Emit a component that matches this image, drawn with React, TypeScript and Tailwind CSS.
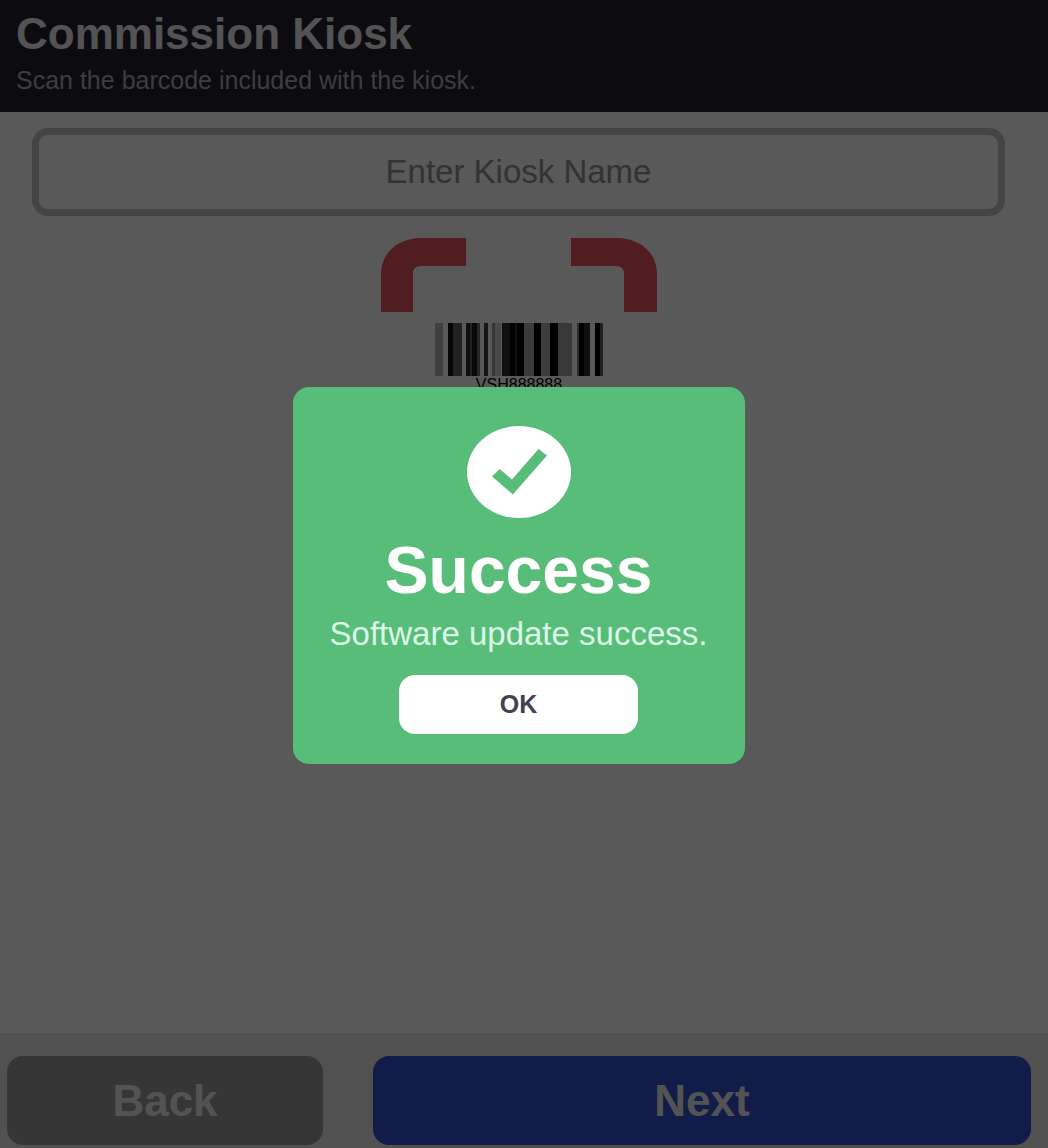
import { useState } from 'react'

// x, width, fill of each bar
const BARS: [number, number, string][] = [
  [54, 8, '#b4b4b4'],
  [67, 5, '#101010'],
  [72, 9, '#606060'],
  [85, 4, '#282828'],
  [89, 2, '#606060'],
  [91, 5, '#181818'],
  [96, 3, '#707070'],
  [103, 4, '#404040'],
  [111, 3, '#989898'],
  [114, 6, '#d4d4d4'],
  [121, 6, '#303030'],
  [127, 2, '#303030'],
  [129, 5, '#000000'],
  [134, 2, '#303030'],
  [136, 7, '#000000'],
  [143, 10, '#a8a8a8'],
  [153, 7, '#000000'],
  [160, 9, '#b0b0b0'],
  [169, 8, '#000000'],
  [177, 14, '#a0a0a0'],
  [196, 2, '#888888'],
  [198, 5, '#000000'],
  [203, 6, '#303030'],
  [214, 5, '#000000'],
  [219, 3, '#606060'],
]

function BarcodeScan() {
  return (
    <svg viewBox="0 0 276 242" className="h-[242px] w-[276px]" role="img" aria-label="Barcode">
      <g fill="#ea535e">
        <path d="M0 74V36C0 14 18 0 40 0H85V28H40Q32 28 32 36V74Z" />
        <path d="M276 74V36C276 14 258 0 236 0H190V28H235Q243 28 243 36V74Z" />
        <path d="M0 168V206C0 228 18 242 40 242H85V214H40Q32 214 32 206V168Z" />
        <path d="M276 168V206C276 228 258 242 236 242H190V214H235Q243 214 243 206V168Z" />
      </g>
      {BARS.map(([x, width, fill]) => (
        <rect key={x} x={x} y="85" width={width} height="53" fill={fill} />
      ))}
      <text x="138" y="152" textAnchor="middle" fontSize="16" fill="#000000">
        VSH888888
      </text>
    </svg>
  )
}

function SuccessIcon() {
  return (
    <svg viewBox="0 0 104 92" className="h-[92px] w-[104px]" aria-hidden="true">
      <ellipse cx="52" cy="46" rx="52" ry="46" fill="#ffffff" />
      <path d="M32.5 43L45 53.5L71.5 23L80 29.5L45.8 68.5L25 50.5Z" fill="#58bd79" />
    </svg>
  )
}

export default function App() {
  const [name, setName] = useState('')
  const [open, setOpen] = useState(true)

  return (
    <div className="relative flex min-h-screen flex-col bg-white font-['Liberation_Sans',sans-serif]">
      <header className="bg-[#22202e] px-4 pt-2.5 pb-4">
        <h1 className="text-[44px] leading-[48px] font-bold text-[#ededed]">Commission Kiosk</h1>
        <p className="mt-1.5 text-[25px] leading-8 text-[#b0b0b4]">Scan the barcode included with the kiosk.</p>
      </header>

      <main className="flex flex-1 flex-col items-center gap-[22px] pt-4 pr-[43px] pl-8">
        <input
          type="text"
          aria-label="Enter Kiosk Name"
          placeholder="Enter Kiosk Name"
          value={name}
          onChange={(e) => setName(e.target.value)}
          className="h-[88px] w-full rounded-2xl border-[7px] border-[#c2c2c2] bg-white text-center text-[33px] placeholder:text-[#929292]"
        />
        <BarcodeScan />
      </main>

      <footer className="grid grid-cols-[316fr_658fr] gap-[50px] bg-[#e7e7e7] pt-[23px] pr-[17px] pb-[3px] pl-[7px] text-[44px] font-bold text-[#ededed]">
        <button type="button" className="h-[89px] rounded-2xl bg-[#9a9a9a]">
          Back
        </button>
        <button type="button" className="h-[89px] rounded-2xl bg-[#3153ce]">
          Next
        </button>
      </footer>

      {/* Modal */}
      {open && (
        <div className="absolute inset-0 flex items-center justify-center bg-black/65 pt-[3px] pr-[11px]">
          <div
            role="dialog"
            aria-modal="true"
            aria-labelledby="dialog-title"
            className="flex w-[452px] flex-col items-center rounded-2xl bg-[#58bd79] pt-[39px] pb-[30px]"
          >
            <SuccessIcon />
            <h2 id="dialog-title" className="mt-5 text-[66px] leading-[64px] font-bold text-white">
              Success
            </h2>
            <p className="mt-3 text-[33px] leading-10 text-[#dcf8e8]">Software update success.</p>
            <button
              type="button"
              onClick={() => setOpen(false)}
              className="mt-[21px] h-[59px] w-[239px] rounded-2xl bg-white text-[25px] font-bold text-[#44424e]"
            >
              OK
            </button>
          </div>
        </div>
      )}
    </div>
  )
}
